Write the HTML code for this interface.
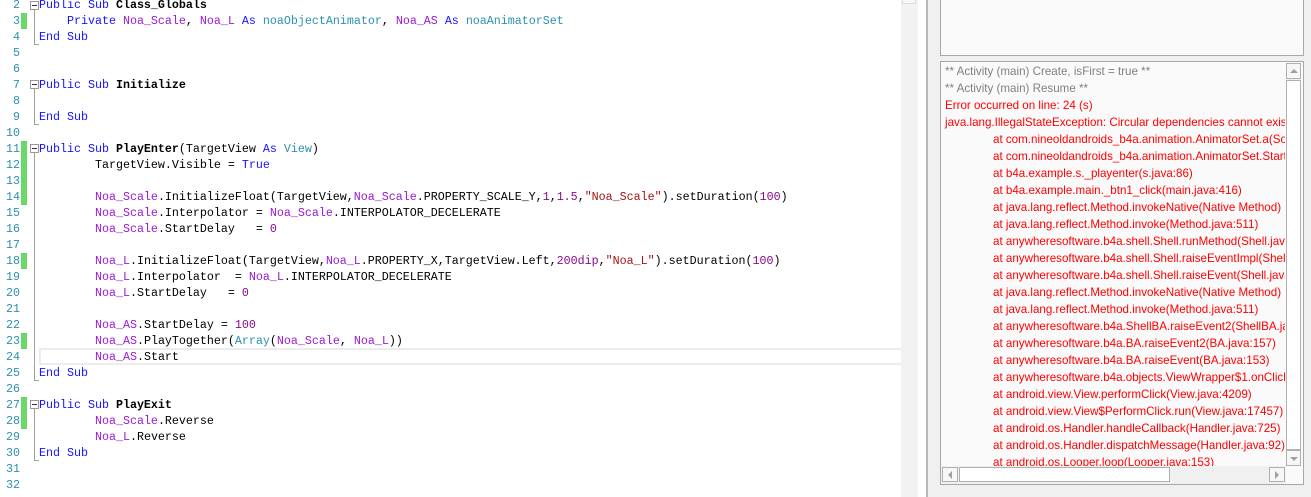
<!DOCTYPE html>
<html><head><meta charset="utf-8"><style>
*{margin:0;padding:0;box-sizing:border-box}
body{width:1311px;height:497px;overflow:hidden;background:#fff;position:relative;font-family:"Liberation Mono",monospace}
.ln{position:absolute;left:0;width:20px;text-align:right;font-size:11.67px;color:#2b91af;line-height:16px;height:16px}
.cl{position:absolute;left:39px;font-size:11.67px;line-height:16px;height:16px;white-space:pre;color:#000}
.k{color:#1414ff}.v{color:#9a1ad6}.t{color:#2b91af}.n{color:#8a0a8a}.s{color:#a31515}.b{font-weight:bold}
.g{position:absolute;left:21px;width:6px;background:#6bd86b}
.fb{position:absolute;left:30px;width:9px;height:9px;border:1px solid #999;background:#fff}
.fb:after{content:"";position:absolute;left:1px;top:3px;width:5px;height:1px;background:#333}
.fl{position:absolute;left:34px;width:1px;background:#a0a0a0}
.ft{position:absolute;left:34px;width:5px;height:1px;background:#a0a0a0}
.log{position:absolute;font-family:"Liberation Sans",sans-serif;font-size:11.6px;line-height:17px;white-space:normal}
.log div{height:17px;white-space:pre}
.log .a{padding-left:48px}
</style></head><body>
<div class="g" style="top:13px;height:16px"></div>
<div class="g" style="top:141px;height:64px"></div>
<div class="g" style="top:253px;height:16px"></div>
<div class="g" style="top:333px;height:16px"></div>
<div class="g" style="top:397px;height:32px"></div>
<div class="fb" style="top:1px"></div><div class="fl" style="top:10px;height:34px"></div><div class="ft" style="top:44px"></div>
<div class="fb" style="top:80px"></div><div class="fl" style="top:89px;height:35px"></div><div class="ft" style="top:124px"></div>
<div class="fb" style="top:144px"></div><div class="fl" style="top:153px;height:227px"></div><div class="ft" style="top:380px"></div>
<div class="fb" style="top:400px"></div><div class="fl" style="top:409px;height:51px"></div><div class="ft" style="top:460px"></div>
<div style="position:absolute;left:39px;top:348px;width:862px;height:17px;border:2px solid #ececec;border-right:none"></div>
<div class="ln" style="top:-3px">2</div><div class="ln" style="top:13px">3</div><div class="ln" style="top:29px">4</div><div class="ln" style="top:45px">5</div><div class="ln" style="top:61px">6</div><div class="ln" style="top:77px">7</div><div class="ln" style="top:93px">8</div><div class="ln" style="top:109px">9</div><div class="ln" style="top:125px">10</div><div class="ln" style="top:141px">11</div><div class="ln" style="top:157px">12</div><div class="ln" style="top:173px">13</div><div class="ln" style="top:189px">14</div><div class="ln" style="top:205px">15</div><div class="ln" style="top:221px">16</div><div class="ln" style="top:237px">17</div><div class="ln" style="top:253px">18</div><div class="ln" style="top:269px">19</div><div class="ln" style="top:285px">20</div><div class="ln" style="top:301px">21</div><div class="ln" style="top:317px">22</div><div class="ln" style="top:333px">23</div><div class="ln" style="top:349px">24</div><div class="ln" style="top:365px">25</div><div class="ln" style="top:381px">26</div><div class="ln" style="top:397px">27</div><div class="ln" style="top:413px">28</div><div class="ln" style="top:429px">29</div><div class="ln" style="top:445px">30</div><div class="ln" style="top:461px">31</div><div class="ln" style="top:477px">32</div>
<div class="cl" style="top:-3px"><span class="k">Public Sub</span> <span class="b">Class_Globals</span></div>
<div class="cl" style="top:13px">    <span class="k">Private</span> <span class="v">Noa_Scale</span>, <span class="v">Noa_L</span> <span class="k">As</span> <span class="t">noaObjectAnimator</span>, <span class="v">Noa_AS</span> <span class="k">As</span> <span class="t">noaAnimatorSet</span></div>
<div class="cl" style="top:29px"><span class="k">End Sub</span></div>
<div class="cl" style="top:77px"><span class="k">Public Sub</span> <span class="b">Initialize</span></div>
<div class="cl" style="top:109px"><span class="k">End Sub</span></div>
<div class="cl" style="top:141px"><span class="k">Public Sub</span> <span class="b">PlayEnter</span>(TargetView <span class="k">As</span> <span class="t">View</span>)</div>
<div class="cl" style="top:157px">        TargetView.Visible = <span class="k">True</span></div>
<div class="cl" style="top:189px">        <span class="v">Noa_Scale</span>.InitializeFloat(TargetView,<span class="v">Noa_Scale</span>.PROPERTY_SCALE_Y,<span class="n">1</span>,<span class="n">1.5</span>,<span class="s">"Noa_Scale"</span>).setDuration(<span class="n">100</span>)</div>
<div class="cl" style="top:205px">        <span class="v">Noa_Scale</span>.Interpolator = <span class="v">Noa_Scale</span>.INTERPOLATOR_DECELERATE</div>
<div class="cl" style="top:221px">        <span class="v">Noa_Scale</span>.StartDelay   = <span class="n">0</span></div>
<div class="cl" style="top:253px">        <span class="v">Noa_L</span>.InitializeFloat(TargetView,<span class="v">Noa_L</span>.PROPERTY_X,TargetView.Left,<span class="n">200dip</span>,<span class="s">"Noa_L"</span>).setDuration(<span class="n">100</span>)</div>
<div class="cl" style="top:269px">        <span class="v">Noa_L</span>.Interpolator  = <span class="v">Noa_L</span>.INTERPOLATOR_DECELERATE</div>
<div class="cl" style="top:285px">        <span class="v">Noa_L</span>.StartDelay   = <span class="n">0</span></div>
<div class="cl" style="top:317px">        <span class="v">Noa_AS</span>.StartDelay = <span class="n">100</span></div>
<div class="cl" style="top:333px">        <span class="v">Noa_AS</span>.PlayTogether(<span class="t">Array</span>(<span class="v">Noa_Scale</span>, <span class="v">Noa_L</span>))</div>
<div class="cl" style="top:349px">        <span class="v">Noa_AS</span>.Start</div>
<div class="cl" style="top:365px"><span class="k">End Sub</span></div>
<div class="cl" style="top:397px"><span class="k">Public Sub</span> <span class="b">PlayExit</span></div>
<div class="cl" style="top:413px">        <span class="v">Noa_Scale</span>.Reverse</div>
<div class="cl" style="top:429px">        <span class="v">Noa_L</span>.Reverse</div>
<div class="cl" style="top:445px"><span class="k">End Sub</span></div>
<div style="position:absolute;left:901px;top:0;width:17px;height:497px;background:#f2f2f2"></div>
<div style="position:absolute;left:902px;top:-2px;width:14px;height:6px;border:1px solid #ddd;background:#f7f7f7"></div>
<div style="position:absolute;left:926px;top:0;width:2px;height:497px;background:#b8b8b8"></div>
<div style="position:absolute;left:928px;top:0;width:383px;height:497px;background:#f0f0f0"></div>
<div style="position:absolute;left:940px;top:-2px;width:364px;height:58px;border:1px solid #a8a8a8;background:#f9f9f9"></div>
<div style="position:absolute;left:940px;top:61px;width:364px;height:424px;border:1px solid #a8a8a8;background:#fafafa"></div>
<div style="position:absolute;left:941px;top:63px;width:344px;height:403px;overflow:hidden">
<div class="log" style="left:4px;top:0;color:#f00"><div style="color:#808080">** Activity (main) Create, isFirst = true **</div><div style="color:#808080">** Activity (main) Resume **</div><div>Error occurred on line: 24 (s)</div><div>java.lang.IllegalStateException: Circular dependencies cannot exist in AnimatorSet</div><div class="a">at com.nineoldandroids_b4a.animation.AnimatorSet.a(SourceFile)</div><div class="a">at com.nineoldandroids_b4a.animation.AnimatorSet.Start(SourceFile)</div><div class="a">at b4a.example.s._playenter(s.java:86)</div><div class="a">at b4a.example.main._btn1_click(main.java:416)</div><div class="a">at java.lang.reflect.Method.invokeNative(Native Method)</div><div class="a">at java.lang.reflect.Method.invoke(Method.java:511)</div><div class="a">at anywheresoftware.b4a.shell.Shell.runMethod(Shell.java)</div><div class="a">at anywheresoftware.b4a.shell.Shell.raiseEventImpl(Shell.java)</div><div class="a">at anywheresoftware.b4a.shell.Shell.raiseEvent(Shell.java)</div><div class="a">at java.lang.reflect.Method.invokeNative(Native Method)</div><div class="a">at java.lang.reflect.Method.invoke(Method.java:511)</div><div class="a">at anywheresoftware.b4a.ShellBA.raiseEvent2(ShellBA.java)</div><div class="a">at anywheresoftware.b4a.BA.raiseEvent2(BA.java:157)</div><div class="a">at anywheresoftware.b4a.BA.raiseEvent(BA.java:153)</div><div class="a">at anywheresoftware.b4a.objects.ViewWrapper$1.onClick</div><div class="a">at android.view.View.performClick(View.java:4209)</div><div class="a">at android.view.View$PerformClick.run(View.java:17457)</div><div class="a">at android.os.Handler.handleCallback(Handler.java:725)</div><div class="a">at android.os.Handler.dispatchMessage(Handler.java:92)</div><div class="a">at android.os.Looper.loop(Looper.java:153)</div></div>
</div>
<div style="position:absolute;left:1286px;top:63px;width:15px;height:403px;background:#f0f0f0"></div>
<div style="position:absolute;left:1286px;top:63px;width:15px;height:16px;border:1px solid #b0b0b0;background:#f7f7f7"></div>
<div style="position:absolute;left:1290px;top:69px;width:0;height:0;border-left:4px solid transparent;border-right:4px solid transparent;border-bottom:4px solid #a0a0a0"></div>
<div style="position:absolute;left:1286px;top:80px;width:15px;height:370px;border:1px solid #b0b0b0;background:#fff"></div>
<div style="position:absolute;left:1286px;top:450px;width:15px;height:16px;border:1px solid #b0b0b0;background:#f7f7f7"></div>
<div style="position:absolute;left:1290px;top:457px;width:0;height:0;border-left:4px solid transparent;border-right:4px solid transparent;border-top:4px solid #a0a0a0"></div>
<div style="position:absolute;left:941px;top:466px;width:345px;height:18px;background:#f0f0f0"></div>
<div style="position:absolute;left:942px;top:467px;width:16px;height:15px;border:1px solid #b0b0b0;background:#f7f7f7"></div>
<div style="position:absolute;left:948px;top:471px;width:0;height:0;border-top:4px solid transparent;border-bottom:4px solid transparent;border-right:4px solid #a0a0a0"></div>
<div style="position:absolute;left:959px;top:467px;width:211px;height:15px;border:1px solid #b0b0b0;background:#fff"></div>
<div style="position:absolute;left:1269px;top:467px;width:16px;height:15px;border:1px solid #b0b0b0;background:#f7f7f7"></div>
<div style="position:absolute;left:1275px;top:471px;width:0;height:0;border-top:4px solid transparent;border-bottom:4px solid transparent;border-left:4px solid #a0a0a0"></div>
</body></html>
